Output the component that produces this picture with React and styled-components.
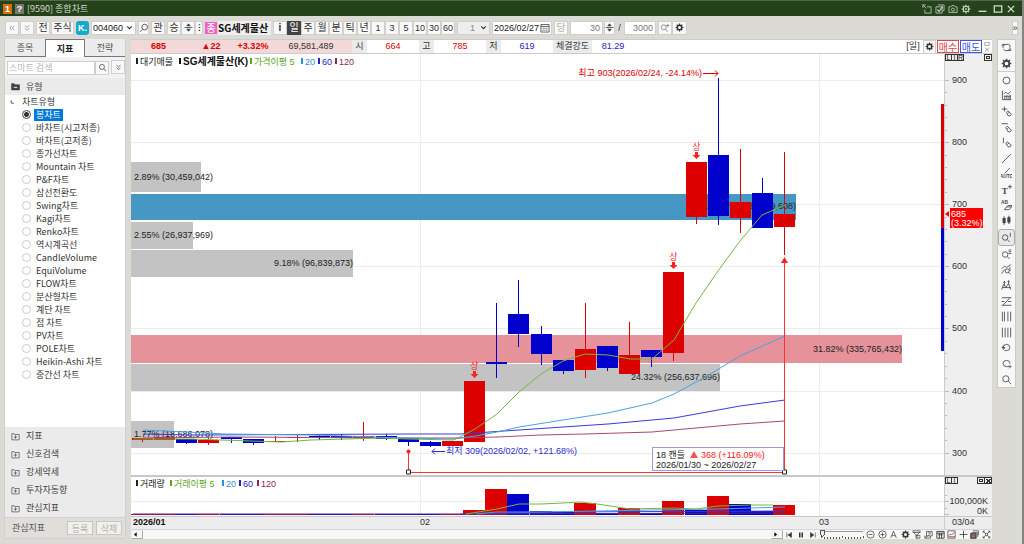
import React from "react";
import styled, { createGlobalStyle, css } from "styled-components";

const digits = `"Liberation Sans", "Noto Sans CJK KR", sans-serif`;
const ui = `"Noto Sans CJK KR", sans-serif`;
const RED = "#dd0000";
const BLUE = "#0000cc";

const Global = createGlobalStyle`
  *, *::before, *::after { box-sizing: border-box; }
  body {
    margin: 0;
    background: #dcdad5;
    color: #333;
    font: 9px/12px ${digits};
  }
  button, input, select { font: inherit; color: inherit; margin: 0; padding: 0; border: 0; border-radius: 0; background: none; }
  button { cursor: pointer; white-space: nowrap; }
  svg { display: block; flex: none; }
`;

/* ---------- icons ---------- */

const glyphs = {
  left2: <path d="M7.5 4.5L4.5 8l3 3.5M11.5 4.5L8.5 8l3 3.5" />,
  down2: <path d="M4.5 4l3.5 3 3.5-3M4.5 8.5l3.5 3 3.5-3" />,
  chevron: <path d="M4 6l4 4 4-4" strokeWidth="2" />,
  search: <><circle cx="7" cy="7" r="4.5" /><path d="M10.5 10.5L14.5 14.5" /></>,
  searchFlip: <><circle cx="9" cy="6.5" r="4.5" /><path d="M5.5 10L2 14" /></>,
  updown: <><path d="M1 8h14" strokeWidth="1.4" /><path d="M8 1.5L5 5h6zM8 14.5L5 11h6z" fill="currentColor" /></>,
  dots: <path d="M8 2v2M8 7v2M8 12v2" strokeWidth="2.4" />,
  calendar: <><path d="M1.5 2.5h13v12h-13zM1.5 5.5h13" /><path d="M4 8.5h2M7 8.5h2M10 8.5h2M4 11.5h2M7 11.5h2M10 11.5h2" /></>,
  gear: <><circle cx="8" cy="8" r="4" strokeWidth="2.6" /><path d="M8 1v3M8 12v3M1 8h3M12 8h3M3 3l2 2M11 11l2 2M13 3l-2 2M5 11l-2 2" strokeWidth="2.2" /></>,
  gearLight: <><circle cx="8" cy="8" r="4.4" strokeWidth="1.6" /><circle cx="8" cy="8" r="1.3" /><path d="M8 1v2.6M8 12.4V15M1 8h2.6M12.4 8H15M3 3l2 2M11 11l2 2M13 3l-2 2M5 11l-2 2" strokeWidth="2" /></>,
  searchPlus: <><circle cx="6" cy="7" r="4" /><path d="M9 10l3 4M10 4h5M12.5 1.5v5" /></>,
  send: <path d="M1 1.5h5M1.5 1v5M2 2l5 5M8 4.5h6.5v10h-10V9" />,
  checks: <><path d="M4.5 1.5h10v9h-2M1.5 4.5h10v10h-10z" /><path d="M4 9l2.5 3L12 4" strokeWidth="2" /></>,
  camera: <><path d="M1.5 4.5h3l1.5-2h4l1.5 2h3v9h-13z" /><circle cx="8" cy="9" r="2.5" /></>,
  min: <path d="M1 13h14" strokeWidth="2.4" />,
  max: <path d="M2 3h12v10H2z" strokeWidth="2" />,
  close: <path d="M3 3l10 10M13 3L3 13" strokeWidth="2.2" />,
  smallSquareX: <path d="M4.5 .5h7v5h-7zM4.5 9l7 6M11.5 9l-7 6" />,
  folderMinus: <><path d="M1 3h5l1.5 2H15v9H1z" fill="currentColor" /><path d="M5 9.5h6" stroke="#fff" strokeWidth="1.6" /></>,
  folderPlus: <path d="M1.5 3h4l1 1.5h8V14h-13zM5 9h6M8 6v6" />,
  cycle: <path d="M3 9V3.5h8a3 3 0 0 1 2 4M1 5.5L3 3l2 2.5M13 8v4.500H6a3 3 0 0 1-2-2M15 10.500l-2 2.500-2-2.500" />,
  circle: <circle cx="8" cy="8" r="5" />,
  indicator: <path d="M2 1v13h13M4 6l3-3 3 3 4-4M5.5 14V9M8.5 14V8M11.5 14V9M13.5 14V7M4 9h10" />,
  plusPen: <path d="M1 4.5h8M5 1v7M8 9l2-2 5 5-2 2.5-3-.5zM10 11l2.500-2.500" />,
  minusPen: <path d="M1 2.5h9M7 8l2-2 6 6-2 2.5-3-.5zM9 10l2.500-2.500" />,
  barPen: <path d="M3.5 1v8M7 9l2-2 6 5-2 2.5-3-.5zM9 11l2.500-2.500" />,
  line: <path d="M1.5 14.5L14.5 1.5" />,
  auto: <><path d="M5 8L13 0" /><text x="8" y="15" textAnchor="middle" fontSize="7" fontFamily="Liberation Sans" fontWeight="bold" fill="currentColor" stroke="none">AUTO</text></>,
  text: <><text x="1" y="14" fontSize="13" fontFamily="Liberation Serif" fontWeight="bold" fill="currentColor" stroke="none">T</text><path d="M10 4h6M13 1v6" /></>,
  erase: <><text x="0" y="6" fontSize="7" fontFamily="Liberation Sans" fontWeight="bold" fill="currentColor" stroke="none">AB</text><path d="M5 14l3-4h7l-3 4zM8 10l2-2h6l-1 2" /></>,
  candles: <path d="M4.5 2v12M11.5 1v12M3 5h3v6H3zM10 4h3v6h-3z" fill="currentColor" strokeWidth="1.5" />,
  searchBar: <><circle cx="6" cy="8" r="4" /><path d="M9 11l3.500 3.500M13.500 1v6" /></>,
  searchLines: <><circle cx="6" cy="8" r="4" /><path d="M9 11l3.500 3.500M11 1.500h4M11 4h4M11 6.500h4" /></>,
  waveSearch: <><path d="M1 7l4-4 3 2 6-4M1 14l4-6" /><circle cx="9" cy="10" r="3" /><path d="M11 12l3 3M13 4v6" /></>,
  peaks: <path d="M1 14l3-8 3 5 4-6 3 9M5 2v5M3.5 4L5 2l1.5 2M11 1v5M9.5 3L11 1l1.5 2M2 11h12" />,
  zLines: <path d="M1 2.5h14M13 2.5L3 13.5M1 13.5h14M1 8h4M10 8h5" />,
  bars: <path d="M2 1v14M5 1v14M10 1v14M14 1v14" />,
  bars2: <path d="M2 1v14M6 1v14M10 1v14M14 1v14" />,
  undo: <path d="M3 8a5 4.5 0 1 1 5 4.5M1 8h5M3 5.500V11l3-2.500M8 12.500H5" />,
  redo: <path d="M13 8a5 4.5 0 1 0-5 4.5M8 12.5h6M12 10l2.500 2.500L12 15" />,
  first: <path d="M3.5 3v10M13 3L6.5 8l6.5 5zM8.5 8H5" fill="currentColor" />,
  pause: <path d="M5.5 3v10M10.5 3v10" strokeWidth="3" />,
  last: <path d="M12.5 3v10M3 3l6.500 5L3 13z" fill="currentColor" />,
  zoomOut: <><circle cx="8" cy="8" r="6.5" /><path d="M4.5 8h7" /></>,
  zoomIn: <><circle cx="8" cy="8" r="6.5" /><path d="M4.5 8h7M8 4.5v7" /></>,
  letterA: <path d="M3 14L8 2l5 12M5 10h6" />,
  funnel: <path d="M1.5 1.5h13v3H2zM3 4.5l4 4v6M13 4.500l-4 4v6M7 14.500h7M7 9.500h7v5" />,
  chartEdit: <path d="M4.5 2.5h10v8h-10zM1.5 13l4-1 6-6M1.5 10v4.500h10V11M7 5h5" />,
  tableIcon: <path d="M1.5 2.5h13v12h-13zM1.5 5.5h13M6 5.5v9M10 5.5v9M4 8.5h8" strokeWidth="1.5" />,
  trend: <><path d="M1.5 1.5h13v13h-13zM3 12h11" /><path d="M3 10l3-3 2 2 5-5" stroke="#d33" strokeWidth="1.6" /></>,
  plus: <path d="M8 1v14M1 8h14" strokeWidth="1.4" />,
  stack: <><path d="M5 1.5h10v8M3 4.5h10v8" /><path d="M1 6h10v9H1z" fill="#555" /><path d="M3 9h6M3 12h6" stroke="#e88" /></>,
  expand: <path d="M2 2l4 4M14 2l-4 4M2 14l4-4M14 14l-4-4M2 5V2h3M11 2h3v3M2 11v3h3M11 14h3v-3M6 6h4v4H6z" />,
  tinyLeft: <path d="M10 4L5 8l5 4z" fill="currentColor" />,
  tinyRight: <path d="M6 4l5 4-5 4z" fill="currentColor" />,
  branch: <path d="M3 3v8h8" strokeWidth="2" />,
};

const Icon = ({ name, size = 10, color = "currentColor", weight = 1.2 }) => (
  <svg width={size} height={size} viewBox="0 0 16 16" fill="none" stroke={color} strokeWidth={weight} color={color} aria-hidden="true">
    {glyphs[name]}
  </svg>
);

/* ---------- window frame ---------- */

const Frame = styled.div`
  display: flex;
  flex-direction: column;
  min-height: 100vh;
  border-right: 2px solid #828580;
`;
const TitleBar = styled.header`
  display: flex;
  align-items: center;
  height: 16px;
  padding: 0 6px 0 3px;
  gap: 3px;
  border-top: 1px solid #56634f;
  background: #24431b;
  color: #d4d9d0;
`;
const Badge = styled.span`
  width: 9px;
  height: 10px;
  background: ${(p) => p.$bg};
  color: #fff;
  font: bold 9px/10px "Liberation Sans", sans-serif;
  text-align: center;
`;
const Title = styled.h1`
  flex: 1;
  margin: 0;
  font: 9px/14px ${ui};
`;
const TitleButton = styled.button`
  display: grid;
  place-items: center;
  width: ${(p) => p.$w || 10}px;
  height: 12px;
`;

/* ---------- toolbar ---------- */

const Toolbar = styled.div`
  display: flex;
  align-items: center;
  height: 23px;
  padding: 0 4px 0 5px;
  gap: 2px;
`;
const Group = styled.div`
  display: flex;
  align-items: center;
  gap: ${(p) => p.$gap || 0}px;
`;
const Tool = styled.button`
  display: flex;
  flex: none;
  align-items: center;
  justify-content: center;
  width: ${(p) => p.$w || 14}px;
  height: 14px;
  border: 1px solid #cfcfcc;
  background: #f8f8f8;
  color: ${(p) => (p.$dim ? "#b9b7a4" : "#333")};
  font: ${(p) => (p.$num ? 9 : 10)}px/12px ${digits};
  ${(p) => p.$on && css`background: #444; border-color: #444; color: #fff;`}
`;
const Market = styled.button`
  width: 13px;
  height: 14px;
  border-radius: 3px;
  background: #17a9cc;
  color: #fff;
  font: bold 9px/14px "Liberation Sans", sans-serif;
`;
const Box = styled.div`
  display: flex;
  flex: none;
  align-items: center;
  width: ${(p) => p.$w}px;
  height: 14px;
  padding-right: 1px;
  border: 1px solid #cfcfcc;
  background: ${(p) => (p.$off ? "#eeeeec" : "#fff")};
`;
const Field = styled.input`
  flex: 1;
  min-width: 0;
  width: 100%;
  height: 12px;
  padding: 0 1px;
  font: 9px/12px ${(p) => (p.$ui ? ui : digits)};
  text-align: ${(p) => p.$align || "left"};
  color: ${(p) => (p.$dim ? "#777" : "#222")};
  outline: 0;
  &::placeholder { color: #b5b5b5; opacity: 1; }
`;
const Picker = styled.select`
  flex: 1;
  height: 12px;
  padding-right: 4px;
  appearance: none;
  color: #888;
  font: 9px/12px ${digits};
  text-align: right;
  text-align-last: right;
`;
const Tag = styled.span`
  width: 12px;
  height: 12px;
  background: #f25fc5;
  color: #fff;
  font: 10px/12px ${ui};
  text-align: center;
`;
const StockName = styled.span`
  width: 53px;
  height: 14px;
  background: #efefef;
  color: #111;
  font: bold 10px/14px ${ui};
  white-space: nowrap;
`;
const Slash = styled.span`
  width: 5px;
  text-align: center;
`;
const Spacer = styled.div`flex: 1;`;

/* ---------- sidebar ---------- */

const Main = styled.main`
  display: flex;
  flex: 1;
  align-items: stretch;
  gap: 5px;
  padding: 0 6px 5px 4px;
`;
const Sidebar = styled.aside`
  display: flex;
  flex: none;
  flex-direction: column;
  width: 122px;
  border: 1px solid #d0d0ce;
  border-top: 0;
  background: #f2f2f2;
  font-family: ${ui};
`;
const Tabs = styled.div`
  display: grid;
  grid-template-columns: repeat(3, 1fr);
  height: 18px;
`;
const Tab = styled.button`
  border-bottom: 1px solid #777;
  background: #ececec;
  color: #555;
  font: 9px/16px ${ui};
  ${(p) => p.$on && css`
    border: 1px solid #777;
    border-bottom: 0;
    background: #fff;
    color: #222;
    font-weight: bold;
  `}
`;
const SearchRow = styled.div`
  display: flex;
  gap: 2px;
  height: 21px;
  padding: 3px 2px;
`;
const Section = styled.button`
  display: flex;
  align-items: center;
  flex: none;
  gap: 6px;
  height: ${(p) => p.$h || 18}px;
  padding: 0 6px;
  background: #ebebeb;
  color: #444;
  font: 9px/12px ${ui};
  text-align: left;
`;
const Tree = styled.fieldset`
  flex: 1;
  margin: 0;
  padding: 0;
  border: 0;
  background: #fff;
  color: #333;
`;
const Branch = styled.div`
  display: flex;
  align-items: center;
  gap: 6px;
  height: 13px;
  padding-left: 5px;
  font: 9px/13px ${ui};
`;
const Option = styled.label`
  display: flex;
  align-items: center;
  gap: 3px;
  height: 13px;
  padding-left: 17px;
  font: 9px/13px ${ui};
  white-space: nowrap;
  span { padding: 0 2px; line-height: 12px; }
  input:checked + span { background: #0078d7; color: #fff; }
`;
const Radio = styled.input.attrs({ type: "radio" })`
  appearance: none;
  width: 9px;
  height: 9px;
  border: 1px solid #ccc;
  border-radius: 50%;
  background: #fff;
  &:checked { border-color: #444; background: radial-gradient(circle, #333 0 2px, #fff 3px); }
`;
const SideFooter = styled.div`
  display: flex;
  align-items: center;
  gap: 3px;
  height: 21px;
  padding: 0 3px 0 7px;
  border-top: 1px solid #d0d0ce;
  background: #e0deda;
  color: #555;
  span { flex: 1; }
`;
const FooterButton = styled.button`
  width: 26px;
  height: 14px;
  border: 1px solid #c6c6c4;
  background: #f0f0ee;
  color: #b3b19d;
  font: 9px/11px ${ui};
`;

/* ---------- chart panel ---------- */

const ChartPanel = styled.section`
  display: flex;
  flex: 1;
  flex-direction: column;
  min-width: 0;
  background: #fff;
`;
const Quote = styled.div`
  display: flex;
  align-items: center;
  height: 15px;
  border-top: 1px solid #ccc;
  border-bottom: 1px solid #ccc;
  color: #333;
`;
const Cell = styled.span`
  flex: 0 0 ${(p) => p.$w}px;
  height: 13px;
  background: ${(p) => (p.$bg === "pink" ? "#f2d8d8" : p.$bg === "grey" ? "#ebebeb" : "transparent")};
  color: ${(p) => p.$c || "#333"};
  font: ${(p) => (p.$b ? "bold" : "normal")} 9px/13px ${digits};
  text-align: center;
  white-space: nowrap;
`;
const Order = styled.button`
  width: 22px;
  height: 13px;
  margin-left: 1px;
  border: 1px solid ${(p) => p.$c};
  color: ${(p) => p.$c};
  font: 10px/11px ${ui};
`;
const Pane = styled.div`
  display: grid;
  grid-template-columns: minmax(0, 1fr) 48px;
  flex: none;
  border-bottom: ${(p) => p.$line || 0}px solid #c8c8c8;
`;
const Plot = styled.svg`
  width: 100%;
  height: ${(p) => p.$h}px;
  font: 9px ${digits};
  overflow: hidden;
`;
const Axis = styled.div`
  border-left: 1px solid #ccc;
  background: #efefef;
`;
const DateRow = styled.div`
  display: grid;
  grid-template-columns: minmax(0, 1fr) 48px;
  height: 12px;
  background: #ededed;
  color: #333;
  font: 9px/11px ${digits};
`;
const DateTrack = styled.div`
  display: grid;
  grid-template-columns: 288px 399px 1fr;
  padding-left: 1px;
  b { padding-left: 1px; color: #111; }
`;
const DateEnd = styled.span`
  padding-left: 7px;
  border-left: 1px solid #ccc;
`;
const ScrollRow = styled.div`
  display: flex;
  align-items: center;
  height: 10px;
  border-top: 1px solid #d5d5d5;
  background: #f7f7f7;
  color: #333;
`;
const Arrow = styled.button`
  width: 12px;
  height: 9px;
  border: 1px solid #aaa;
  border-top-color: #eee;
  border-left-color: #eee;
  color: #000;
`;
const MiniTools = styled.div`
  display: flex;
  align-items: center;
  flex: 0 0 ${(p) => p.$w}px;
`;
const MiniButton = styled.button`
  display: grid;
  place-items: center;
  flex: 1;
  height: 9px;
`;

const Rail = styled.nav`
  display: flex;
  flex: none;
  flex-direction: column;
  width: 19px;
  height: 349px;
  border: 1px solid #c9c9c6;
  background: #f8f8f8;
`;
const RailButton = styled.button`
  display: grid;
  place-items: center;
  flex: 1;
  min-height: 0;
  color: #444;
  ${(p) => p.$sep && css`border-bottom: 1px solid #ccc;`}
  ${(p) => p.$on && css`border: 1px solid #aaa; border-radius: 3px; background: #e9e9e9;`}
`;

/* ---------- data ---------- */

const chartTypes = [
  "봉차트", "바차트(시고저종)", "바차트(고저종)", "종가선차트", "Mountain 차트", "P&F차트", "삼선전환도",
  "Swing차트", "Kagi차트", "Renko차트", "역시계곡선", "CandleVolume", "EquiVolume", "FLOW차트", "분산형차트",
  "계단 차트", "점 차트", "PV차트", "POLE차트", "Heikin-Ashi 차트", "중간선 차트",
];
const sections = ["지표", "신호검색", "강세약세", "투자자동향", "관심지표"];
const railIcons = [
  "cycle", "gear", "circle", "indicator", "plusPen", "minusPen", "barPen", "line", "auto", "text", "erase",
  "candles", "searchBar", "searchLines", "waveSearch", "peaks", "zLines", "bars", "bars2", "undo", "redo", "search",
];

/* up, body top, body bottom, wick top, wick bottom, volume bar height */
const candles = [
  [1, 384, 386, 384, 388, 1], [1, 383, 386, 383, 386, 1], [0, 385, 389, 385, 390, 1], [1, 386, 389, 384, 391, 1],
  [0, 383, 385, 383, 389, 1], [0, 385, 389, 385, 391, 1], [1, 387, 388, 382, 388, 1], [1, 383, 384, 381, 388, 1],
  [0, 382, 383, 381, 386, 1], [0, 382, 384, 380, 386, 1], [1, 382, 384, 368, 387, 1], [0, 382, 385, 380, 386, 1],
  [0, 384, 388, 384, 392, 1], [0, 388, 392, 387, 393, 1], [1, 387, 392, 387, 392, 1], [1, 327, 388, 327, 388, 5],
  [0, 308, 310, 249, 324, 26], [0, 260, 280, 226, 293, 21], [0, 280, 300, 272, 311, 4], [0, 306, 317, 306, 320, 3],
  [1, 295, 316, 249, 324, 12], [0, 292, 314, 292, 317, 2], [1, 301, 320, 268, 320, 7], [0, 296, 303, 296, 313, 2],
  [1, 218, 299, 218, 307, 14], [1, 108, 163, 108, 170, 5], [0, 101, 162, 24, 171, 19], [1, 148, 164, 95, 179, 11],
  [0, 139, 174, 124, 174, 4], [1, 160, 173, 98, 201, 10],
];
/* volume bars are coloured by the change in volume where it differs from the candle */
const volumeUp = { 16: 1, 25: 0, 26: 1, 27: 0 };
const cx = (i) => Math.round(11 + 22.14 * i) + 0.5;

const profile = [
  [108, 30, 70, "#c3c3c3", "2.89% (30,459,042)", 126],
  [140, 26, 665, "#4797c5", "27.47% (289,859,608)", 155],
  [168, 27, 62, "#c3c3c3", "2.55% (26,937,969)", 184],
  [196, 27, 222, "#c3c3c3", "9.18% (96,839,873)", 212],
  [281, 28, 771, "#e5929a", "31.82% (335,765,432)", 298],
  [310, 27, 589, "#c3c3c3", "24.32% (256,637,696)", 326],
  [367, 27, 43, "#c3c3c3", "1.77% (18,686,078)", 383],
];

const averages = [
  ["#a04a78", "12,384 100,383 277,384 322,384 366,383 410,381 454,380 521,378 543,376 609,370 654,367"],
  ["#3a3ad8", "12,380 60,381 277,380 329,380 388,376 432,373 477,370 521,366 543,364 609,352 654,346"],
  ["#4aa2e0", "12,376 55,378 94,380 180,381 277,384 322,385 344,382 366,378 388,373 432,366 477,359 521,349 543,340 576,322 609,302 654,282"],
  ["#74b83a", "2,385 60,385 120,387 150,388 180,386 250,384 277,385 322,386 327,384 344,375 366,360 388,338 410,320 432,307 454,300 477,301 499,305 521,305 543,286 565,249 587,217 609,187 631,161 654,151"],
];
const volumeAverages = [
  ["#5a2a90", "2,37 330,37 654,36"],
  ["#3a3ad8", "330,37 420,35 654,34"],
  ["#4aa2e0", "345,37 366,35 410,35 521,33 587,32 654,30"],
  ["#74b83a", "335,37 366,32 388,27 410,27 432,26 449,25 466,27 499,32 543,31 565,32 587,29 619,28 642,28"],
];

/* ---------- chart drawing ---------- */

const Legend = ({ y, items }) => (
  <g fontSize="9">
    {items.map(([x, color, label, bold]) => (
      <g key={label} fill={color}>
        <rect x={x} y={y - 6} width="2" height="6" />
        <text x={x + 4} y={y + 1} fontSize={bold ? 10 : 9} fontWeight={bold ? "bold" : "normal"}>{label}</text>
      </g>
    ))}
  </g>
);

const LimitMark = ({ x, y }) => (
  <g fill="#ff2020">
    <text x={x} y={y} textAnchor="middle">상</text>
    <path d={`M${x - 1.5} ${y + 2}h3v3h2.5l-4 4-4-4h2.5z`} />
  </g>
);

const PricePlot = () => (
  <Plot $h={421} role="img" aria-label="SG세계물산 일봉 차트">
    <g stroke="#ececec" shapeRendering="crispEdges">
      {[26, 88, 150, 212, 274, 337, 399].map((y) => <line key={y} x1="0" x2="100%" y1={y + 0.5} y2={y + 0.5} />)}
      {[289, 688].map((x) => <line key={x} x1={x + 0.5} x2={x + 0.5} y1="0" y2="100%" />)}
    </g>
    {profile.map(([y, h, w, fill]) => <rect key={y} x="0" y={y} width={w} height={h} fill={fill} />)}
    {profile.map(([y, , w, , label, base]) => (
      <text key={y} x={w > 200 ? w : 3} y={base} textAnchor={w > 200 ? "end" : "start"} fill="#222">{label}</text>
    ))}
    <g shapeRendering="crispEdges">
      {candles.map(([up, top, bottom, high, low], i) => (
        <g key={i} fill={up ? RED : BLUE}>
          <rect x={cx(i) - 0.5} y={high} width="1" height={low - high} />
          <rect x={cx(i) - 10.5} y={top} width="21" height={bottom - top} />
        </g>
      ))}
    </g>
    {averages.map(([stroke, points]) => <polyline key={stroke} points={points} fill="none" stroke={stroke} />)}
    <LimitMark x={343.5} y={315} />
    <LimitMark x={542.5} y={206} />
    <LimitMark x={565.5} y={96} />
    <Legend y={10} items={[
      [5, "#222", "대기매물"], [48, "#111", "SG세계물산(K)", true], [119, "#5aa61e", "가격이평 5"],
      [170, "#2b8fdc", "20"], [187, "#2222cc", "60"], [204, "#8a2a5a", "120"],
    ]} />
    <g fill={RED} stroke={RED}>
      <text x="571" y="22" stroke="none" textAnchor="end">최고 903(2026/02/24, -24.14%)</text>
      <path d="M572 19.5h15m-3-3l3 3-3 3" fill="none" />
    </g>
    <g fill="#2a2acc" stroke="#2a2acc">
      <text x="315" y="400" stroke="none">최저 309(2026/02/02, +121.68%)</text>
      <path d="M314 397.5h-13m3-3l-3 3 3 3" fill="none" />
    </g>
    <g shapeRendering="crispEdges" fill="#ff3030">
      <rect x="277" y="397" width="1" height="21" />
      <rect x="277" y="418" width="377" height="1" />
      <rect x="653" y="208" width="1" height="210" />
    </g>
    <circle cx="277.5" cy="397.5" r="2" fill="#ff2020" />
    <path d="M653.5 203l3.500 6h-7z" fill="#ff2020" />
    <path d="M275.5 420v-4h4v4zM651.5 420v-4h4v4z" fill="#fff" stroke="#222" />
    <rect x="521.5" y="393.5" width="131" height="23" fill="#fff" stroke="#9a9ae0" />
    <text x="525" y="404" fill="#222">18 캔들</text>
    <path d="M563 397l4 7h-8z" fill="#ff5050" />
    <text x="570" y="404" fill="#ff2020">368 (+116.09%)</text>
    <text x="525" y="414" fill="#222">2026/01/30 ~ 2026/02/27</text>
    <rect x="810" y="50" width="3" height="124" fill={RED} />
    <rect x="810" y="174" width="3" height="123" fill={BLUE} />
  </Plot>
);

const CornerBoxes = ({ letters, boxes }) => (
  <g fill="none" stroke="#333" fontSize="7" fontFamily="Liberation Sans" shapeRendering="crispEdges">
    {[...letters].map((l, i) => (
      <g key={l}>
        <rect x={0.5 + i * 6} y="0.5" width="6" height="6" />
        <text x={3.5 + i * 6} y="6" textAnchor="middle" fill="#222" stroke="none">{l}</text>
      </g>
    ))}
    {boxes.map((b, i) => {
      const x = 46.5 - 7 * (boxes.length - i);
      return (
        <g key={b}>
          <rect x={x} y="0.5" width="7" height="6" />
          {b === "x"
            ? <path d={`M${x + 2} 2l4 4M${x + 6} 2l-4 4`} />
            : <rect x={x + 2} y="2.5" width="3" height="2" />}
        </g>
      );
    })}
  </g>
);

const PriceAxis = () => (
  <Plot $h={421}>
    <g stroke="#bbb" shapeRendering="crispEdges">
      {Array.from({ length: 31 }, (_, i) => {
        const y = Math.round(26 + i * 12.42) + 0.5;
        return <line key={i} x1="0" x2={i % 5 ? 2 : 4} y1={y} y2={y} />;
      })}
    </g>
    <g fill="#333">
      {[900, 800, 700, 600, 500, 400, 300].map((p, i) => <text key={p} x="7" y={29 + Math.round(i * 62.1)}>{p}</text>)}
    </g>
    <rect x="5" y="154" width="33" height="20" fill="#ff0000" />
    <path d="M4 157v6l-4-3z" fill="#ff0000" />
    <g fill="#fff"><text x="6" y="163">685</text><text x="6" y="172">(3.32%)</text></g>
    <CornerBoxes letters="LIR" boxes={["o"]} />
  </Plot>
);

const VolumePlot = () => (
  <Plot $h={39}>
    <g stroke="#ececec" shapeRendering="crispEdges">
      <line x1="0" x2="100%" y1="24.5" y2="24.5" />
      <line x1="289.5" x2="289.5" y1="0" y2="100%" />
      <line x1="688.5" x2="688.5" y1="0" y2="100%" />
    </g>
    <g shapeRendering="crispEdges">
      {candles.map(([up, , , , , v], i) => (
        <rect key={i} x={cx(i) - 11.5} y={38 - v} width="22" height={v} fill={(volumeUp[i] ?? up) ? RED : BLUE} />
      ))}
    </g>
    {volumeAverages.map(([stroke, points]) => <polyline key={stroke} points={points} fill="none" stroke={stroke} />)}
    <Legend y={9} items={[
      [5, "#222", "거래량"], [39, "#5aa61e", "거래이평 5"], [91, "#2b8fdc", "20"], [108, "#2222cc", "60"], [126, "#8a2a5a", "120"],
    ]} />
  </Plot>
);

const VolumeAxis = () => (
  <Plot $h={39}>
    <path d="M0 18.5h2M0 24.5h4M0 31.5h2M0 37.500h4" stroke="#bbb" />
    <g fill="#333" textAnchor="end"><text x="43" y="27">100,000K</text><text x="43" y="37">0K</text></g>
    <CornerBoxes letters="LI" boxes={["o", "x"]} />
  </Plot>
);

const ZoomTrack = () => (
  <svg width="46" height="9" stroke="#555" fill="none" shapeRendering="crispEdges" aria-hidden="true">
    <path d="M2 1.5h42" stroke="#999" />
    {Array.from({ length: 15 }, (_, i) => <path key={i} d={`M${2.5 + i * 3} ${i % 7 ? 7 : 6}v2`} />)}
    <path d="M1.5 .5h4v4l-2 2-2-2z" fill="#eee" />
  </svg>
);

/* ---------- page ---------- */

export default function App() {
  return (
    <>
      <Global />
      <Frame>
        <TitleBar>
          <Badge $bg="#d0700c">1</Badge>
          <Badge $bg="#77776f">?</Badge>
          <Title>[9590] 종합차트</Title>
          {["send", "checks", "camera", "gearLight"].map((n) => <TitleButton key={n} aria-label={n}><Icon name={n} /></TitleButton>)}
          <TitleButton aria-label="minimize" $w={16}><Icon name="min" size={9} /></TitleButton>
          <TitleButton aria-label="maximize"><Icon name="max" /></TitleButton>
          <TitleButton aria-label="close"><Icon name="close" /></TitleButton>
        </TitleBar>

        <Toolbar>
          <Group $gap={1}>
            <Tool aria-label="prev"><Icon name="left2" color="#888" /></Tool>
            <Tool aria-label="more"><Icon name="down2" color="#888" /></Tool>
          </Group>
          <Group $gap={1}>
            <Tool>전</Tool>
            <Tool $w={23}>주식</Tool>
          </Group>
          <Market>K.</Market>
          <Box $w={45}>
            <Field aria-label="종목코드" defaultValue="004060" />
            <Icon name="chevron" size={9} />
          </Box>
          <Tool $w={11} aria-label="search"><Icon name="searchFlip" /></Tool>
          <Tool>관</Tool>
          <Group>
            <Tool>승</Tool>
            <Tool aria-label="step"><Icon name="updown" size={9} /></Tool>
            <Tool $w={8} aria-label="menu"><Icon name="dots" size={9} /></Tool>
          </Group>
          <Group $gap={1}>
            <Tag>종</Tag>
            <StockName>SG세계물산</StockName>
          </Group>
          <Group>
            <Tool><b>i</b></Tool>
            <Tool $on>일</Tool>
            {["주", "월", "분", "틱", "년"].map((t) => <Tool key={t}>{t}</Tool>)}
            {["1", "3", "5", "10", "30", "60"].map((t) => <Tool key={t} $num>{t}</Tool>)}
          </Group>
          <Box $w={33} $off>
            <Picker aria-label="간격" defaultValue="1"><option>1</option></Picker>
            <Icon name="chevron" size={9} />
          </Box>
          <Box $w={60}>
            <Field aria-label="일자" defaultValue="2026/02/27" />
            <Icon name="calendar" />
          </Box>
          <Tool $dim>당</Tool>
          <Group $gap={1}>
            <Box $w={33}><Field aria-label="봉 개수" defaultValue="30" $align="right" $dim /></Box>
            <Tool $w={11} aria-label="step"><Icon name="updown" size={9} /></Tool>
          </Group>
          <Slash>/</Slash>
          <Box $w={32}><Field aria-label="전체 개수" defaultValue="3000" $align="right" $dim /></Box>
          <Group>
            <Tool aria-label="zoom"><Icon name="searchPlus" color="#777" /></Tool>
            <Tool $w={15} aria-label="settings"><Icon name="gear" size={9} /></Tool>
          </Group>
          <Spacer />
          <Tool $w={6} $num aria-label="expand">»</Tool>
        </Toolbar>

        <Main>
          <Sidebar>
            <Tabs role="tablist">
              <Tab role="tab">종목</Tab>
              <Tab role="tab" aria-selected="true" $on>지표</Tab>
              <Tab role="tab">전략</Tab>
            </Tabs>
            <SearchRow>
              <Group>
                <Box $w={88}><Field aria-label="검색" placeholder="스마트 검색" $ui /></Box>
                <Tool aria-label="search"><Icon name="search" size={9} /></Tool>
              </Group>
              <Tool aria-label="more"><Icon name="down2" size={9} /></Tool>
            </SearchRow>
            <Section $h={17}><Icon name="folderMinus" size={9} />유형</Section>
            <Tree>
              <Branch><Icon name="branch" size={6} />차트유형</Branch>
              {chartTypes.map((name, i) => (
                <Option key={name}>
                  <Radio name="chart-type" defaultChecked={i === 0} />
                  <span>{name}</span>
                </Option>
              ))}
            </Tree>
            {sections.map((name) => <Section key={name}><Icon name="folderPlus" size={9} />{name}</Section>)}
            <SideFooter>
              <span>관심지표</span>
              <FooterButton>등록</FooterButton>
              <FooterButton>삭제</FooterButton>
            </SideFooter>
          </Sidebar>

          <ChartPanel>
            <Quote>
              <Cell $w={55} $bg="pink" $c={RED} $b>685</Cell>
              <Cell $w={50} $bg="pink" $c={RED} $b>▲22</Cell>
              <Cell $w={34} $bg="pink" $c={RED} $b>+3.32%</Cell>
              <Cell $w={82} $bg="pink">69,581,489</Cell>
              <Cell $w={15} $bg="grey">시</Cell>
              <Cell $w={52} $c={RED}>664</Cell>
              <Cell $w={15} $bg="grey">고</Cell>
              <Cell $w={52} $c={RED}>785</Cell>
              <Cell $w={15} $bg="grey">저</Cell>
              <Cell $w={52} $c="#2222cc">619</Cell>
              <Cell $w={39} $bg="grey">체결강도</Cell>
              <Cell $w={42} $c="#2222cc">81.29</Cell>
              <Spacer />
              <Cell $w={20}>[일]</Cell>
              <Tool $w={13} aria-label="settings"><Icon name="gear" size={9} /></Tool>
              <Order $c="#e04848">매수</Order>
              <Order $c="#3a5ae0">매도</Order>
              <Icon name="smallSquareX" color="#888" />
            </Quote>
            <Pane $line={2}>
              <PricePlot />
              <Axis><PriceAxis /></Axis>
            </Pane>
            <Pane $line={1}>
              <VolumePlot />
              <Axis><VolumeAxis /></Axis>
            </Pane>
            <DateRow>
              <DateTrack><b>2026/01</b><span>02</span><span>03</span></DateTrack>
              <DateEnd>03/04</DateEnd>
            </DateRow>
            <ScrollRow>
              <Arrow aria-label="scroll left"><Icon name="tinyLeft" size={7} /></Arrow>
              <Spacer />
              <Arrow aria-label="scroll right"><Icon name="tinyRight" size={7} /></Arrow>
              <MiniTools $w={36}>
                {["first", "pause", "last"].map((n) => <MiniButton key={n} aria-label={n}><Icon name={n} size={8} /></MiniButton>)}
              </MiniTools>
              <ZoomTrack />
              <MiniTools $w={127}>
                {["zoomOut", "zoomIn", "letterA", "gear", "funnel", "chartEdit", "tableIcon", "trend", "plus", "stack", "expand"].map((n) => (
                  <MiniButton key={n} aria-label={n}><Icon name={n} size={9} /></MiniButton>
                ))}
              </MiniTools>
            </ScrollRow>
          </ChartPanel>

          <Rail>
            {railIcons.map((n, i) => (
              <RailButton key={n} aria-label={n} $sep={i === 1} $on={n === "searchBar"}><Icon name={n} size={11} /></RailButton>
            ))}
          </Rail>
        </Main>
      </Frame>
    </>
  );
}
